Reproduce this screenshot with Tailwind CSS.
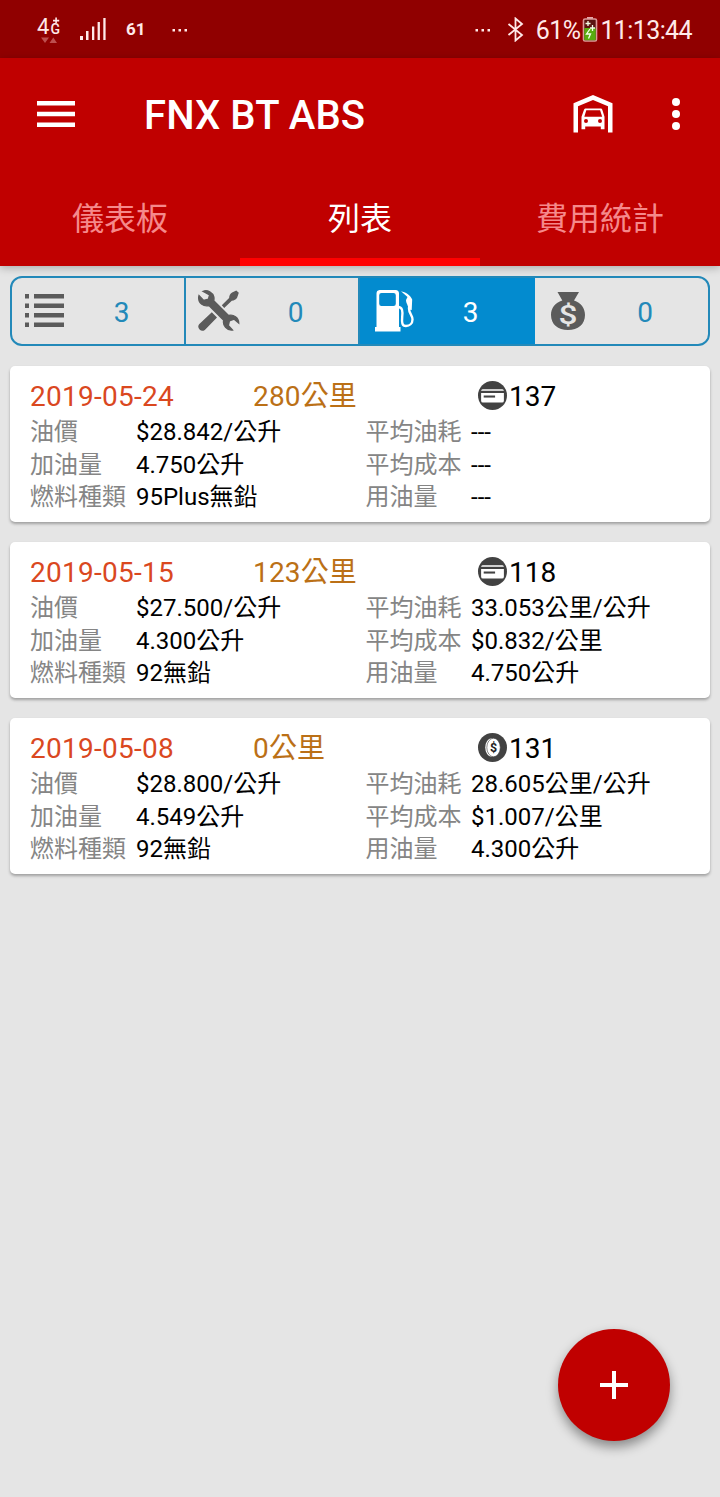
<!DOCTYPE html>
<html lang="zh-Hant">
<head>
	<meta charset="utf-8">
	<meta name="viewport" content="width=device-width, initial-scale=1">
	<title>FNX BT ABS</title>
	<script src="https://cdn.jsdelivr.net/npm/@tailwindcss/browser@4"></script>
</head>
<body class="bg-[#e5e5e5] font-[Roboto,'Noto_Sans_CJK_TC',sans-serif] text-black">

	<!-- icons used more than once -->
	<svg class="hidden">
		<symbol id="icon-card" viewBox="0 0 28 28">
			<circle cx="14" cy="14" r="14" fill="#424242"/>
			<path d="M4.500 8h19a1.500 1.500 0 0 1 1.500 1.500H3A1.500 1.500 0 0 1 4.500 8zM3 11.500h22v7.500a1.800 1.800 0 0 1-1.800 1.800H4.800A1.800 1.800 0 0 1 3 19z" fill="#fff"/>
			<path d="M5.500 15h11" stroke="#424242" stroke-width="2"/>
		</symbol>
	</svg>

	<div class="relative flex h-[1497px] w-[720px] flex-col overflow-hidden">

		<!-- status bar -->
		<div class="flex h-[58px] shrink-0 items-center bg-[#900000] text-[#ffe9e9]">
			<svg class="ml-9 h-[30px] w-7" viewBox="0 0 28 30" fill="currentColor">
				<text x="1" y="20" font-size="22" font-family="Roboto">4</text>
				<text x="14.500" y="20" font-size="14" font-weight="500" font-family="Roboto">G</text>
				<path d="M19.300 3.500h1.600v2.300h2.300v1.600h-2.300v1.700h-1.600V7.400H17V5.800h2.300z"/>
				<path d="M5 23.500h8L9 29zM13.500 29h7.500l-3.700-5.500z" fill="#bd4f4f"/>
			</svg>
			<svg class="ml-4 h-6 w-7" viewBox="0 0 28 24" fill="currentColor">
				<path d="M0 19h3v4H0zM6 14h2.500v9H6zM12 9.500h2.300V23H12zM17.600 5h2.300v18h-2.300zM23.300 1h2.300v22h-2.300z"/>
			</svg>
			<span class="ml-[18px] pt-px text-[17px] font-bold">61</span>
			<svg class="ml-[26px] mt-[3px] h-[3px] w-4" viewBox="0 0 16 3" fill="currentColor">
				<path d="M.500 0h2.500v2.500H.500zM6.500 0H9v2.500H6.500zM12.500 0H15v2.500h-2.500z"/>
			</svg>
			<svg class="ml-auto mt-[3px] h-[3px] w-4" viewBox="0 0 16 3" fill="currentColor">
				<path d="M.500 0h2.500v2.500H.500zM6.500 0H9v2.500H6.500zM12.500 0H15v2.500h-2.500z"/>
			</svg>
			<svg class="ml-4 h-[25px] w-[17px]" viewBox="0 0 16 25" fill="none" stroke="currentColor" stroke-width="1.800">
				<path d="M1 7l13.500 11L8 23.500v-22L14.500 7 1 18"/>
			</svg>
			<span class="ml-3 pt-[4px] text-[25px] tracking-[-0.600px]">61%</span>
			<svg class="ml-[2px] h-[26px] w-4" viewBox="0 0 16 26">
				<path d="M5 1h6v2H5z" fill="#e6a9a9"/>
				<rect x="1.500" y="3" width="13" height="22" rx="1.500" fill="#5b1410" stroke="#dd9999" stroke-width="1.600"/>
				<path d="M2.300 12h11.400v12.200H2.300z" fill="#58ac10"/>
				<path d="M6 5v5M3.500 7.500h5M10.500 9v6M8 12h5M8 13l-3.500 5h4l-2 4.500" stroke="#f3ffe8" stroke-width="1.300" fill="none"/>
			</svg>
			<span class="mr-7 ml-[2px] pt-[4px] text-[25px] tracking-[-0.600px]">11:13:44</span>
		</div>

		<!-- app bar with tabs -->
		<div class="relative z-10 shrink-0 bg-[#c00000] shadow-[0_2px_8px_rgba(0,0,0,0.25)]">
			<div class="flex h-28 items-center text-white">
				<svg class="ml-[37px] h-[26px] w-[38px]" viewBox="0 0 38 26" fill="currentColor">
					<path d="M0 0h38v4.500H0zM0 10.800h38v4.500H0zM0 21.500h38V26H0z"/>
				</svg>
				<h1 class="ml-[69px] pt-[4px] text-[40px] font-medium tracking-[0.100px]">FNX BT ABS</h1>
				<svg class="ml-auto h-[38px] w-10" viewBox="0 0 40 38" fill="currentColor">
					<path d="M.500 8.200L20 0l19.500 8.200V37.500H35V11.300L20 5 5 11.300v26.200H.500z"/>
					<path fill-rule="evenodd" d="M13 13.500h14.500c.900 0 1.500.500 1.800 1.300l2.200 7v12.500h-3.700v-2.800H12.200v2.800H8.500V21.800l2.500-7c.300-.800 1-1.300 2-1.300zm.300 1.700l-2 6.600h17.900l-2.100-6.600zM13 24a2 2 0 1 0 0 4 2 2 0 0 0 0-4zm14 0a2 2 0 1 0 0 4 2 2 0 0 0 0-4z"/>
				</svg>
				<svg class="mr-10 ml-[59px] h-8 w-2" viewBox="0 0 8 32" fill="currentColor">
					<circle cx="4" cy="4" r="4"/>
					<circle cx="4" cy="16" r="4"/>
					<circle cx="4" cy="28" r="4"/>
				</svg>
			</div>
			<div class="grid h-24 grid-cols-3 pt-px text-center text-[32px] leading-[97px] text-[#f5898b]">
				<span class="h-[95px]">儀表板</span>
				<span class="h-[95px] border-b-8 border-[#ff0000] text-white">列表</span>
				<span class="h-[95px]">費用統計</span>
			</div>
		</div>

		<!-- record type filter -->
		<div class="mx-[10px] mt-[10px] grid h-[70px] shrink-0 grid-cols-[174px_174px_175px_1fr] divide-x-2 divide-[#2389b9] overflow-hidden rounded-xl border-2 border-[#2389b9] text-[28px] text-[#2389b9]">
			<div class="flex items-center">
				<svg class="ml-[13px] h-[34px] w-[39px] shrink-0" viewBox="0 0 39 34" fill="#5b5b5b">
					<path d="M0 0h4v4.500H0zM9 0h30v4.500H9zM0 9.500h4V14H0zM9 9.500h30V14H9zM0 19h4v4.500H0zM9 19h30v4.500H9zM0 28.500h4V33H0zM9 28.500h30V33H9z"/>
				</svg>
				<span class="grow pt-[3px] pr-[5px] text-center">3</span>
			</div>
			<div class="flex items-center">
				<svg class="ml-3 h-[42px] w-[42px] shrink-0" viewBox="0 0 42 42" fill="#5b5b5b">
					<path d="M13.800 22.300l5.200 5.200L6.800 39.900a4.100 4.100 0 0 1-5.700-5.700z"/>
					<path d="M23.800 15.200l7.300-7.300c.200-2.500 1-4.200 3-5.500L38.300.600l2.500 2.200-1.600 4.800c-1.300 2.200-3 3-5.400 3.200L26.200 18z"/>
					<path d="M5.200 1.300C9.500-.300 14.800 2.500 15.800 7c.300 1.300.200 2.400-.100 3.700L30.500 25.500c5-1.400 10.200 2.100 10.200 7.500l-4.500-3.800-4.800 1.600-1.100 4.700 4.100 4.500c-5.400.700-9.900-4.500-8.700-9.700L11 15.500C5.700 17 .600 13.100.700 7.800c0-.900.100-1.500.300-2.200l4.700 4.900 4.700-1.400 1.200-4.200z" stroke="#5b5b5b" stroke-width="1.400"/>
				</svg>
				<span class="grow pt-[3px] pr-[7px] text-center">0</span>
			</div>
			<div class="flex items-center border-[#038bcf] bg-[#038bcf] text-white">
				<svg class="ml-[15px] h-[42px] w-10 shrink-0" viewBox="0 0 40 42" fill="currentColor">
					<path fill-rule="evenodd" d="M4.500 0h16A3.500 3.500 0 0 1 24 3.500V37h1.500v4.500H0V37h1.500V3.500A3.500 3.500 0 0 1 4.500 0zM6.500 3a2.300 2.300 0 0 0-2.300 2.300v8.400A2.300 2.300 0 0 0 6.500 16h12a2.300 2.300 0 0 0 2.300-2.300V5.300A2.300 2.300 0 0 0 18.500 3z"/>
					<path d="M23 17c4.500 0 4.800 4 4.200 10-.500 5.500-.200 9 3.800 9 3.500 0 6.500-2.500 6.500-6.500 0-4.500-3.500-6-3.500-11 0-3 1.500-5 1.500-8" fill="none" stroke="currentColor" stroke-width="2.400"/>
					<path d="M26 1.200c4.500.800 9.500 4 11.200 8.300l-.500 10.500-3.400-.500c.300-4-2.300-6-2.300-9.500l1.500-3z"/>
				</svg>
				<span class="grow pt-[3px] pr-[7px] text-center">3</span>
			</div>
			<div class="flex items-center">
				<svg class="ml-[16px] h-[39px] w-[34px] shrink-0" viewBox="0 0 34 39">
					<path d="M6.500 0H28l-5 8.500c7 2.500 11 7.500 11 14.500 0 9.500-7 15-17 15S0 32.500 0 23C0 16 4 11 11.300 8.500z" fill="#5b5b5b"/>
					<text x="17" y="31.500" text-anchor="middle" font-size="25" font-weight="500" font-family="Roboto" textLength="19" lengthAdjust="spacingAndGlyphs" fill="#e5e5e5">$</text>
				</svg>
				<span class="grow pt-[3px] pr-[3px] text-center">0</span>
			</div>
		</div>

		<!-- refuel records -->
		<div class="mx-[10px] mt-5 flex flex-col gap-5 text-2xl">

			<div class="h-[156px] rounded-[5px] bg-white px-5 pt-3 shadow-[0_2px_3px_rgba(0,0,0,0.3)]">
				<div class="mb-px flex h-[37px] items-center text-[28px]">
					<span class="w-[223px] tracking-[0.250px] text-[#da481f]">2019-05-24</span>
					<span class="w-[225px] tracking-[0.150px] text-[#bb7016]">280公里</span>
					<svg class="mr-[2px] mb-[2px] size-[29px]"><use href="#icon-card"/></svg>
					<span>137</span>
				</div>
				<div class="grid grid-cols-[106px_229.5px_105.5px_1fr] leading-[32.7px] whitespace-nowrap">
					<span class="text-[#858585]">油價</span>
					<span>$28.842/公升</span>
					<span class="text-[#858585]">平均油耗</span>
					<span>---</span>
					<span class="text-[#858585]">加油量</span>
					<span>4.750公升</span>
					<span class="text-[#858585]">平均成本</span>
					<span>---</span>
					<span class="text-[#858585]">燃料種類</span>
					<span>95Plus無鉛</span>
					<span class="text-[#858585]">用油量</span>
					<span>---</span>
				</div>
			</div>

			<div class="h-[156px] rounded-[5px] bg-white px-5 pt-3 shadow-[0_2px_3px_rgba(0,0,0,0.3)]">
				<div class="mb-px flex h-[37px] items-center text-[28px]">
					<span class="w-[223px] tracking-[0.250px] text-[#da481f]">2019-05-15</span>
					<span class="w-[225px] tracking-[0.150px] text-[#bb7016]">123公里</span>
					<svg class="mr-[2px] mb-[2px] size-[29px]"><use href="#icon-card"/></svg>
					<span>118</span>
				</div>
				<div class="grid grid-cols-[106px_229.5px_105.5px_1fr] leading-[32.7px] whitespace-nowrap">
					<span class="text-[#858585]">油價</span>
					<span>$27.500/公升</span>
					<span class="text-[#858585]">平均油耗</span>
					<span>33.053公里/公升</span>
					<span class="text-[#858585]">加油量</span>
					<span>4.300公升</span>
					<span class="text-[#858585]">平均成本</span>
					<span>$0.832/公里</span>
					<span class="text-[#858585]">燃料種類</span>
					<span>92無鉛</span>
					<span class="text-[#858585]">用油量</span>
					<span>4.750公升</span>
				</div>
			</div>

			<div class="h-[156px] rounded-[5px] bg-white px-5 pt-3 shadow-[0_2px_3px_rgba(0,0,0,0.3)]">
				<div class="mb-px flex h-[37px] items-center text-[28px]">
					<span class="w-[223px] tracking-[0.250px] text-[#da481f]">2019-05-08</span>
					<span class="w-[225px] tracking-[0.150px] text-[#bb7016]">0公里</span>
					<svg class="mr-[2px] mb-[2px] size-[29px]" viewBox="0 0 28 28">
						<circle cx="14" cy="14" r="14" fill="#424242"/>
						<ellipse cx="13" cy="14" rx="6" ry="9" fill="#fff"/>
						<ellipse cx="15" cy="14" rx="6.500" ry="9" fill="#fff" stroke="#424242" stroke-width=".6"/>
						<text x="15" y="18" text-anchor="middle" font-size="12" font-weight="700" font-family="Roboto" fill="#222">$</text>
					</svg>
					<span>131</span>
				</div>
				<div class="grid grid-cols-[106px_229.5px_105.5px_1fr] leading-[32.7px] whitespace-nowrap">
					<span class="text-[#858585]">油價</span>
					<span>$28.800/公升</span>
					<span class="text-[#858585]">平均油耗</span>
					<span>28.605公里/公升</span>
					<span class="text-[#858585]">加油量</span>
					<span>4.549公升</span>
					<span class="text-[#858585]">平均成本</span>
					<span>$1.007/公里</span>
					<span class="text-[#858585]">燃料種類</span>
					<span>92無鉛</span>
					<span class="text-[#858585]">用油量</span>
					<span>4.300公升</span>
				</div>
			</div>
		</div>

		<!-- add button -->
		<button class="absolute right-[50px] bottom-14 flex size-28 items-center justify-center rounded-full bg-[#c00000] shadow-[0_6px_12px_rgba(0,0,0,0.4)]">
			<svg class="size-7" viewBox="0 0 28 28" fill="#fff">
				<path d="M12 0h4v12h12v4H16v12h-4V16H0v-4h12z"/>
			</svg>
		</button>
	</div>
</body>
</html>
